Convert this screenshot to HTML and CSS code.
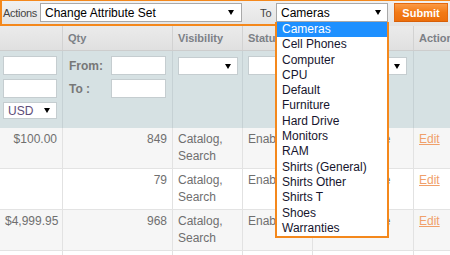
FILE: index.html
```html
<!DOCTYPE html>
<html>
<head>
  <link rel="stylesheet" href="styles.css">
</head>
<body>

  <div class="massaction">
    <span class="field-label">Actions</span>
    <div class="select select-action"><span>Change Attribute Set</span><i class="arrow"></i></div>
    <span class="field-label to-label">To</span>
    <div class="select select-set"><span>Cameras</span><i class="arrow"></i></div>
    <button class="submit">Submit</button>
  </div>

  <div class="grid">
    <div class="row head">
      <div class="cell"></div>
      <div class="cell">Qty</div>
      <div class="cell">Visibility</div>
      <div class="cell">Status</div>
      <div class="cell">Websites</div>
      <div class="cell">Action</div>
    </div>

    <div class="row filter">
      <div class="cell price-filter">
        <div class="filter-input"></div>
        <div class="filter-input"></div>
        <div class="select small-select"><span>USD</span><i class="arrow"></i></div>
      </div>
      <div class="cell qty-filter">
        <span class="range-label">From:</span>
        <div class="filter-input"></div>
        <span class="range-label">To :</span>
        <div class="filter-input"></div>
      </div>
      <div class="cell">
        <div class="select small-select vis-select"><span></span><i class="arrow"></i></div>
      </div>
      <div class="cell">
        <div class="filter-input status-input"></div>
      </div>
      <div class="cell">
        <div class="select small-select site-select"><span></span><i class="arrow"></i></div>
      </div>
      <div class="cell"></div>
    </div>

    <div class="row data even">
      <div class="cell num">$100.00</div>
      <div class="cell num">849</div>
      <div class="cell">Catalog,<br>Search</div>
      <div class="cell">Enabled</div>
      <div class="cell">Main Website</div>
      <div class="cell"><a class="edit" href="#">Edit</a></div>
    </div>
    <div class="row data">
      <div class="cell num"></div>
      <div class="cell num">79</div>
      <div class="cell">Catalog,<br>Search</div>
      <div class="cell">Enabled</div>
      <div class="cell">Main Website</div>
      <div class="cell"><a class="edit" href="#">Edit</a></div>
    </div>
    <div class="row data even">
      <div class="cell num">$4,999.95</div>
      <div class="cell num">968</div>
      <div class="cell">Catalog,<br>Search</div>
      <div class="cell">Enabled</div>
      <div class="cell">Main Website</div>
      <div class="cell"><a class="edit" href="#">Edit</a></div>
    </div>
    <div class="row data last">
      <div class="cell"></div>
      <div class="cell"></div>
      <div class="cell"></div>
      <div class="cell"></div>
      <div class="cell"></div>
      <div class="cell"></div>
    </div>
  </div>

  <!-- open list of the "To" select -->
  <ul class="set-list">
    <li class="selected">Cameras</li>
    <li>Cell Phones</li>
    <li>Computer</li>
    <li>CPU</li>
    <li>Default</li>
    <li>Furniture</li>
    <li>Hard Drive</li>
    <li>Monitors</li>
    <li>RAM</li>
    <li>Shirts (General)</li>
    <li>Shirts Other</li>
    <li>Shirts T</li>
    <li>Shoes</li>
    <li>Warranties</li>
  </ul>

</body>
</html>
```

FILE: styles.css
```css
* {
  box-sizing: border-box;
}

body {
  margin: 0;
  position: relative;
  width: 450px;
  height: 255px;
  overflow: hidden;
  background: #fff;
  font-family: "Liberation Sans", Arial, sans-serif;
  font-size: 12px;
  color: #6f6f6f;
}

/* Mass action bar */
.massaction {
  position: relative;
  display: flex;
  align-items: center;
  height: 26px;
  padding: 0 0 2px 1px;
  border-top: 1px solid #f4881c;
  border-left: 2px solid #f4881c;
  background: linear-gradient(#f0f0f0, #e4e4e4);
}

/* bottom edge only runs to the open list */
.massaction::after {
  content: "";
  position: absolute;
  left: -2px;
  bottom: 0;
  width: 389px;
  height: 2px;
  background: #f4881c;
}

.field-label {
  width: 37px;
  font-size: 11px;
  color: #444;
  letter-spacing: -0.3px;
}

.to-label {
  width: 16px;
  margin-left: 18px;
  letter-spacing: 0;
}

.select {
  display: flex;
  align-items: center;
  justify-content: space-between;
  height: 19px;
  padding: 0 7px 0 4px;
  background: #fff;
  border: 1px solid #a9a9a9;
  color: #000;
  font-size: 12px;
  white-space: nowrap;
}

.select-action {
  width: 202px;
}

.select-set {
  width: 112px;
  padding-right: 6px;
}

.arrow {
  width: 0;
  height: 0;
  border-left: 3px solid transparent;
  border-right: 3px solid transparent;
  border-top: 5px solid #000;
}

.submit {
  width: 54px;
  height: 19px;
  margin-left: 6px;
  padding: 0;
  border: 1px solid #e2690f;
  border-bottom-color: #d85f08;
  background: linear-gradient(#fb9a45, #f27a15 50%, #ec6f0c);
  color: #fff;
  font-family: "Liberation Sans", Arial, sans-serif;
  font-size: 11px;
  font-weight: bold;
}

/* Grid */
.row {
  display: grid;
  grid-template-columns: 63px 110px 70px 70px 101px 1fr;
}

.cell {
  padding: 0 5px;
  border-right: 1px solid #e2e2e2;
  white-space: nowrap;
  overflow: hidden;
}

.cell:last-child {
  border-right: 0;
}

.head {
  height: 25px;
  background: linear-gradient(#ebebeb, #e0e0e0);
  border-bottom: 1px solid #cdcdcd;
}

.head .cell {
  line-height: 24px;
  font-size: 11px;
  font-weight: bold;
  color: #7c8086;
  border-right-color: #d2d2d2;
}

.filter {
  height: 77px;
  padding-top: 5px;
  background: #d6e1e3;
}

.filter .cell {
  border-right-color: #c6d1d4;
  margin-top: -5px;
  padding-top: 5px;
}

.filter-input {
  height: 19px;
  background: #fff;
  border: 1px solid #c5cdd0;
}

.price-filter {
  display: flex;
  flex-direction: column;
  gap: 4px;
  padding-left: 3px;
}

.small-select {
  height: 18px;
  border-color: #c5cdd0;
  padding-right: 6px;
}

.price-filter .small-select {
  height: 17px;
  color: #5d4c78;
  font-size: 12px;
}

.qty-filter {
  display: grid;
  grid-template-columns: 42px 55px;
  grid-auto-rows: 19px;
  row-gap: 4px;
  align-items: center;
  padding-left: 6px;
}

.range-label {
  font-weight: bold;
  color: #777;
}

.vis-select {
  width: 60px;
  margin-top: 1px;
}

.status-input {
  width: 60px;
}

.site-select {
  width: 89px;
  margin-top: 1px;
}

.data {
  height: 41px;
  padding-top: 3px;
  line-height: 17px;
  border-bottom: 1px solid #e3e3e3;
}

.data .cell {
  margin-top: -3px;
  padding-top: 3px;
}

.data.even {
  background: #f6f6f6;
}

.data.last {
  height: 4px;
  border-bottom: 0;
}

.num {
  text-align: right;
}

.edit {
  color: #f0a06a;
}

/* Open select list */
.set-list {
  position: absolute;
  left: 275px;
  top: 22px;
  width: 114px;
  margin: 0;
  padding: 0;
  list-style: none;
  background: #fff;
  border: 2px solid #f4881c;
  border-top: 0;
  color: #16152e;
  font-size: 12px;
}

.set-list li {
  height: 15.3px;
  line-height: 15.3px;
  padding-left: 5px;
  white-space: nowrap;
}

.set-list li.selected {
  background: #1e90ff;
  color: #fff;
}
```
